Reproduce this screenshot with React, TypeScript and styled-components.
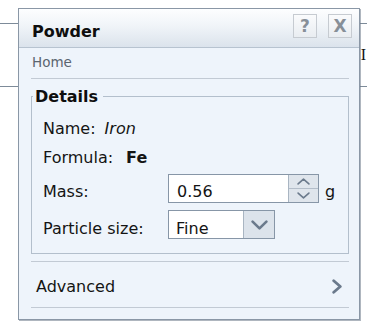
import * as React from "react";
import styled, { createGlobalStyle } from "styled-components";

const FONT = `"DejaVu Sans", Verdana, sans-serif`;

const GlobalStyle = createGlobalStyle`
  body {
    margin: 0;
    background: #ffffff;
  }
  * {
    box-sizing: border-box;
  }
`;

const Page = styled.div`
  position: relative;
  width: 392px;
  height: 331px;
  overflow: hidden;
`;

// page content that the floating panel covers
const Backdrop = styled.div`
  margin-top: 23px;
  width: 367px;
  height: 64px;
  padding: 22px 1px 0 0;
  border-top: 1px solid #7d8b99;
  border-bottom: 1px solid #7d8b99;
  font-family: "Liberation Serif", serif;
  font-size: 16px;
  color: #111;
  text-align: right;
  white-space: nowrap;
`;

const Panel = styled.div`
  position: absolute;
  left: 18px;
  top: 8px;
  width: 342px;
  background: #eef4fb;
  border: 1px solid #8a97a6;
  box-shadow: 1px 1px 0 rgba(110, 122, 138, 0.55);
  font-family: ${FONT};
  color: #141414;
`;

const Header = styled.div`
  display: flex;
  align-items: flex-start;
  justify-content: space-between;
  height: 39px;
  padding: 0 7px 0 13px;
  background: linear-gradient(#fdfeff, #f0f4f8 45%, #dbe3ec);
  border-bottom: 1px solid #b7c3d0;
`;

const Title = styled.div`
  margin-top: 13px;
  font-size: 16px;
  line-height: 19px;
  font-weight: bold;
  color: #0e0e0e;
`;

const HeaderButtons = styled.div`
  display: flex;
  gap: 11px;
  margin-top: 5px;
`;

const HeaderButton = styled.button`
  width: 24px;
  height: 24px;
  padding: 0;
  border: 1px solid #c6cbd1;
  background: linear-gradient(#fafbfc, #e9edf1);
  color: #878f98;
  font-family: ${FONT};
  font-size: 17px;
  font-weight: bold;
  line-height: 22px;
  text-align: center;
`;

const Body = styled.div`
  padding: 0 10px 11px 12px;
`;

const Crumb = styled.div`
  padding: 6px 1px 8px;
  border-bottom: 1px solid #c2cad4;
  font-size: 13.5px;
  line-height: 16px;
  color: #5b6570;
`;

const Group = styled.fieldset`
  margin: 8px 0 0;
  padding: 13px 0 14px 0;
  border: 1px solid #b3bfcc;
  min-inline-size: 0;
`;

const GroupTitle = styled.legend`
  margin-left: 1px;
  padding: 0 5px 0 2px;
  font-size: 16px;
  line-height: 19px;
  font-weight: bold;
  color: #0e0e0e;
`;

const Fields = styled.div`
  padding-left: 11px;
`;

const Row = styled.div<{ $gap: number }>`
  display: flex;
  align-items: baseline;
  margin-top: ${(p) => p.$gap}px;
  font-size: 16px;
  line-height: 19px;
`;

const Label = styled.span<{ $wide?: boolean }>`
  flex-shrink: 0;
  width: ${(p) => (p.$wide ? "125px" : "auto")};
`;

const Value = styled.span<{ $offset: number; $kind: "italic" | "bold" }>`
  margin-left: ${(p) => p.$offset}px;
  font-style: ${(p) => (p.$kind === "italic" ? "italic" : "normal")};
  font-weight: ${(p) => (p.$kind === "bold" ? "bold" : "normal")};
`;

const SpinBox = styled.div`
  display: inline-flex;
  height: 29px;
  border: 1px solid #8796a7;
  background: #fff;
`;

const NumberField = styled.input`
  width: 119px;
  height: 27px;
  padding: 6px 0 0 8px;
  border: none;
  outline: none;
  background: #fff;
  font-family: ${FONT};
  font-size: 16px;
  color: #141414;
`;

const SpinButtons = styled.div`
  display: flex;
  flex-direction: column;
  width: 30px;
  border-left: 1px solid #a9b5c2;
  background: #dfe5ec;
`;

const SpinButton = styled.div<{ $top?: boolean }>`
  flex: 1;
  display: flex;
  align-items: center;
  justify-content: center;
  border-bottom: ${(p) => (p.$top ? "1px solid #b3bdc9" : "none")};
`;

const Unit = styled.span`
  margin-left: 6px;
`;

const SelectBox = styled.div`
  display: inline-flex;
  height: 29px;
  border: 1px solid #8796a7;
  background: #fff;
`;

const SelectValue = styled.div`
  width: 74px;
  height: 27px;
  padding: 8px 0 0 7px;
  font-size: 16px;
  line-height: 19px;
`;

const SelectButton = styled.div`
  display: flex;
  align-items: center;
  justify-content: center;
  width: 31px;
  border-left: 1px solid #a9b5c2;
  background: #dce3eb;
`;

const Section = styled.div`
  display: flex;
  align-items: center;
  justify-content: space-between;
  margin-top: 7px;
  padding: 15px 7px 11px 5px;
  border-top: 1px solid #c2cad4;
  border-bottom: 1px solid #c2cad4;
  font-size: 16px;
  line-height: 19px;
`;

const Chevron = ({ dir, w, h, stroke }: { dir: "up" | "down" | "right"; w: number; h: number; stroke: number }) => {
  const s = stroke / 2 + 0.3;
  const d =
    dir === "up"
      ? `M${s} ${h - s} L${w / 2} ${s} L${w - s} ${h - s}`
      : dir === "down"
      ? `M${s} ${s} L${w / 2} ${h - s} L${w - s} ${s}`
      : `M${s} ${s} L${w - s} ${h / 2} L${s} ${h - s}`;
  return (
    <svg width={w} height={h} viewBox={`0 0 ${w} ${h}`}>
      <path d={d} fill="none" stroke="#6b7a8c" strokeWidth={stroke} strokeLinecap="round" strokeLinejoin="round" />
    </svg>
  );
};

export default function App() {
  return (
    <Page>
      <GlobalStyle />
      <Backdrop>Iron powder sample I</Backdrop>
      <Panel>
        <Header>
          <Title>Powder</Title>
          <HeaderButtons>
            <HeaderButton>?</HeaderButton>
            <HeaderButton>X</HeaderButton>
          </HeaderButtons>
        </Header>
        <Body>
          <Crumb>Home</Crumb>
          <Group>
            <GroupTitle>Details</GroupTitle>
            <Fields>
              <Row $gap={0}>
                <Label>Name:</Label>
                <Value $offset={9} $kind="italic">Iron</Value>
              </Row>
              <Row $gap={10}>
                <Label>Formula:</Label>
                <Value $offset={13} $kind="bold">Fe</Value>
              </Row>
              <Row $gap={7}>
                <Label $wide>Mass:</Label>
                <SpinBox>
                  <NumberField defaultValue="0.56" readOnly />
                  <SpinButtons>
                    <SpinButton $top>
                      <Chevron dir="up" w={13} h={7} stroke={1.6} />
                    </SpinButton>
                    <SpinButton>
                      <Chevron dir="down" w={13} h={7} stroke={1.6} />
                    </SpinButton>
                  </SpinButtons>
                </SpinBox>
                <Unit>g</Unit>
              </Row>
              <Row $gap={7}>
                <Label $wide>Particle size:</Label>
                <SelectBox>
                  <SelectValue>Fine</SelectValue>
                  <SelectButton>
                    <Chevron dir="down" w={17} h={10} stroke={2.6} />
                  </SelectButton>
                </SelectBox>
              </Row>
            </Fields>
          </Group>
          <Section>
            <span>Advanced</span>
            <Chevron dir="right" w={10} h={15} stroke={2.8} />
          </Section>
        </Body>
      </Panel>
    </Page>
  );
}
